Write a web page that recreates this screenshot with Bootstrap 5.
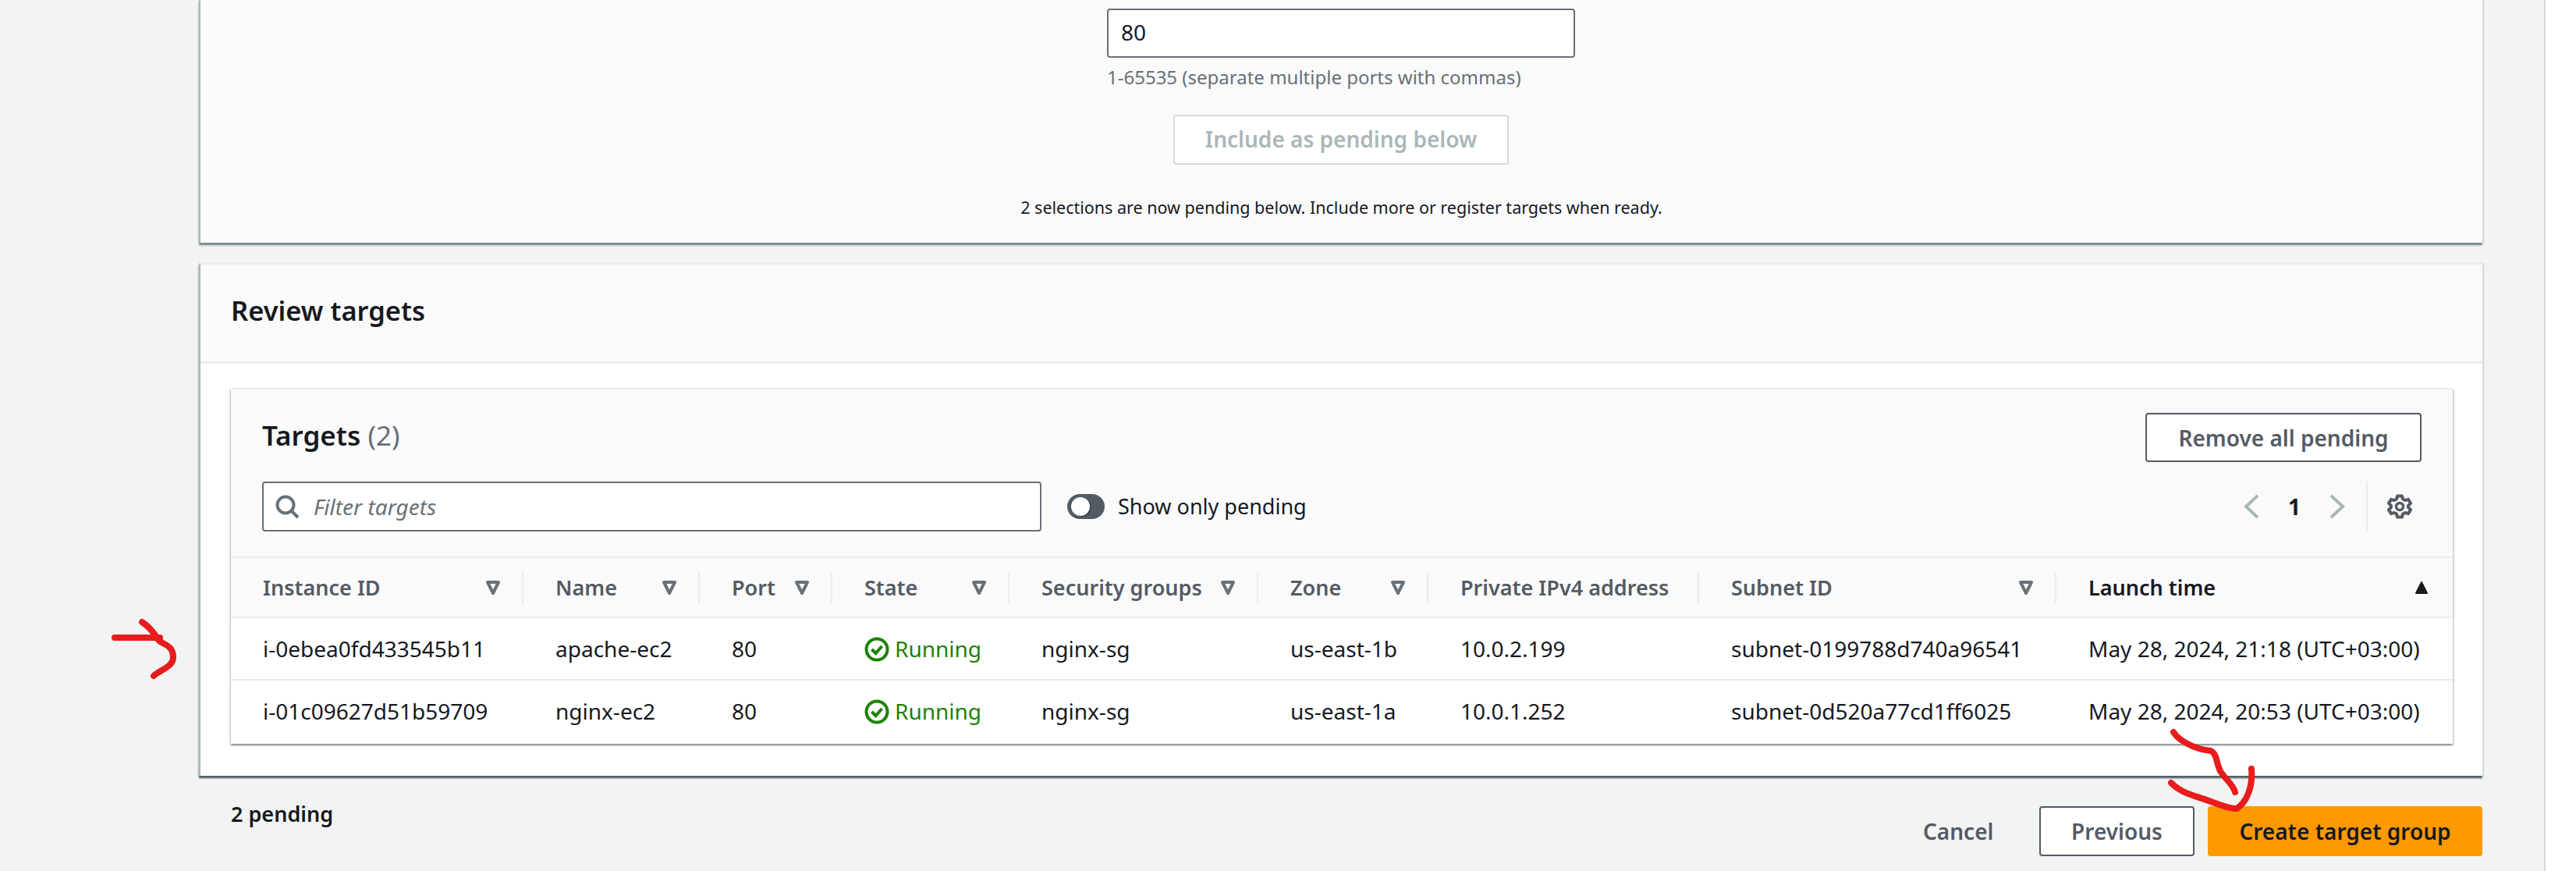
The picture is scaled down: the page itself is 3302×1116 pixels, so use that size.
<!doctype html>
<html lang="en">
<head>
<meta charset="utf-8">
<title>Review targets</title>
<link rel="stylesheet" href="https://cdn.jsdelivr.net/npm/bootstrap@5.3.0/dist/css/bootstrap.min.css">
<style>
html,body{height:1116px;overflow:hidden}
body{font-family:"Noto Sans",sans-serif;font-size:28px;line-height:40px;color:#16191f;background:#fff;position:relative}
.shell{width:3302px;height:1116px}
.mainarea{width:3263px;background:#f2f3f3;padding:0 79px 0 255px;border-right:2px solid #d5dbdb}
.panel{background:#fff;border:0;border-left:2px solid #aab7b8;box-shadow:2px 0 1px #d5dbdb;position:relative}
.panel-top{background:#fafafa;height:311px;padding-top:11px;box-shadow:2px 0 1px #d5dbdb,0 3px 2px rgba(0,28,36,.55)}
.panel-review{margin-top:26px;height:657px;border-top:2px solid #eaeded;box-shadow:2px 0 1px #d5dbdb,0 3px 2px rgba(0,28,36,.75)}
.panel-head{height:127px;background:#fafafa;border-bottom:3px solid #eaeded;padding:0 39px 7px;font-size:34.5px;font-weight:600}
.port-block{width:600px;margin-left:1162px}
.port-input{width:600px;height:63px;background:#fff;border:2px solid #687078;border-radius:4px;padding:0 16px;font-size:28px;line-height:56px;color:#16191f}
.hint{font-size:24px;line-height:34px;color:#687078;margin-top:8px}
.btn-include{display:block;width:430px;height:64px;margin:31px 0 0 1247px;padding:0 0 2px;background:#fff;border:2px solid #d5dbdb;border-radius:4px;color:#aab7b8;font-size:28px;font-weight:600}
.pending-note{text-align:center;font-size:21.5px;line-height:32px;margin-top:39px}
.inner{margin:31px 38px 0 39px;background:#fff;box-shadow:0 2px 2px rgba(0,28,36,.35),2px 2px 2px rgba(0,28,36,.12),-2px 2px 2px rgba(0,28,36,.12);border-top:2px solid #eaeded;height:456px}
.inner-head{background:#fafafa;height:214px;padding:0 40px;position:relative}
.targets-title{font-size:35px;font-weight:600;line-height:44px;padding-top:37px}
.targets-title span{font-weight:400;color:#687078}
.btn-remove{width:354px;height:63px;margin-top:30px;padding:0;background:#fff;border:2px solid #545b64;border-radius:4px;color:#545b64;font-size:28px;font-weight:600;line-height:1}
.tools{margin-top:25px;height:64px}
.filter{width:999px;height:64px;background:#fff;border:2px solid #687078;border-radius:4px;padding:0 20px 0 15px;gap:18px}
.filter-text{font-style:italic;color:#687078;font-size:28px}
.toggle-track{width:48px;height:32px;border-radius:16px;background:#545b64;padding:4px 5px;margin-right:17px}
.toggle-knob{width:24px;height:24px;border-radius:50%;background:#fff;display:block;box-shadow:1px 1px 2px rgba(0,28,36,.6)}
.toggle-wrap{margin-left:33px;font-size:27px}
.pager{margin-left:auto;height:64px;padding-right:12px}
.pager-num{font-weight:700;font-size:28px;width:88px;text-align:center}
.pager-sep{width:2px;height:64px;background:#eaeded;margin:0 25px 0 26px}
table.tgt{table-layout:fixed;width:2848px;margin:0;--bs-table-bg:transparent;border-collapse:collapse}
table.tgt th{background:#fafafa;padding:18px 0 17px;border-top:2px solid #eaeded;border-bottom:2px solid #eaeded;font-weight:600;color:#545b64;font-size:27px}
.th-in{height:40px;padding:0 27px 0 41px;border-right:2px solid #eaeded;display:flex;justify-content:space-between;align-items:center;white-space:nowrap}
table.tgt th:last-child .th-in{border-right:0;padding-right:30px;color:#16191f}
table.tgt td{padding:19px 0 19px 41px;border-bottom:2px solid #eaeded;font-size:28px;white-space:nowrap;color:#16191f;height:80px;line-height:40px}
table.tgt td.ok{color:#1d8102}
table.tgt tr:last-child td{border-bottom:0;height:81px}
.ok svg{margin-right:7px;vertical-align:-6px}
.foot{height:122px;position:relative}
.pending-count{font-size:27px;font-weight:600;line-height:40px;padding:29px 0 0 41px}
.foot-actions{gap:17px;margin-top:-30px}
.btn-cancel,.btn-prev,.btn-create{height:64px;padding:0;font-size:28px;font-weight:600;border-radius:4px;line-height:1}
.btn-cancel{background:none;border:0;color:#545b64;width:88px;margin-right:44px}
.btn-prev{width:199px;background:#fff;border:2px solid #545b64;color:#545b64}
.btn-create{width:352px;background:#ff9900;border:0;color:#16191f}
.ink{position:absolute;left:0;top:0;width:3302px;height:1116px;pointer-events:none}
.ink path{fill:none;stroke:#e81c1c;stroke-width:8;stroke-linecap:round;stroke-linejoin:round}
</style>
</head>
<body>
<div class="shell d-flex">
  <div class="mainarea">
    <section class="panel panel-top">
      <div class="port-block">
        <div class="port-input">80</div>
        <div class="hint">1-65535 (separate multiple ports with commas)</div>
      </div>
      <button type="button" class="btn-include" disabled>Include as pending below</button>
      <div class="pending-note">2 selections are now pending below. Include more or register targets when ready.</div>
    </section>
    <section class="panel panel-review">
      <div class="panel-head d-flex align-items-center"><span>Review targets</span></div>
      <div class="inner">
        <div class="inner-head">
          <div class="d-flex justify-content-between align-items-start">
            <div class="targets-title">Targets <span>(2)</span></div>
            <button type="button" class="btn-remove">Remove all pending</button>
          </div>
          <div class="tools d-flex align-items-center">
            <div class="filter d-flex align-items-center">
              <svg width="31" height="31" viewBox="0 0 31 31" fill="none" stroke="#687078" stroke-width="4"><circle cx="13" cy="13" r="10.5"/><path d="M20 20l9 9"/></svg>
              <span class="filter-text">Filter targets</span>
            </div>
            <div class="toggle-wrap d-flex align-items-center">
              <span class="toggle-track d-flex"><span class="toggle-knob"></span></span>
              <span>Show only pending</span>
            </div>
            <div class="pager d-flex align-items-center">
              <svg width="22" height="32" viewBox="0 0 22 32" fill="none" stroke="#aab7b8" stroke-width="4"><path d="M19 2L4 16l15 14"/></svg>
              <span class="pager-num">1</span>
              <svg width="22" height="32" viewBox="0 0 22 32" fill="none" stroke="#aab7b8" stroke-width="4"><path d="M3 2l15 14L3 30"/></svg>
              <span class="pager-sep"></span>
              <svg width="32" height="32" viewBox="0 0 32 32" fill="none" stroke="#545b64" stroke-width="4"><circle cx="16" cy="16" r="4.5" stroke-width="3.5"/><path d="M13 2.5h6l1 4 3 1.6 4-1.2 3 5-3 3v2.2l3 3-3 5-4-1.2-3 1.6-1 4h-6l-1-4-3-1.6-4 1.2-3-5 3-3v-2.2l-3-3 3-5 4 1.2 3-1.6z" stroke-linejoin="round"/></svg>
            </div>
          </div>
        </div>
        <table class="table tgt">
          <colgroup><col style="width:375px"><col style="width:226px"><col style="width:170px"><col style="width:227px"><col style="width:319px"><col style="width:218px"><col style="width:347px"><col style="width:458px"><col style="width:508px"></colgroup>
          <thead><tr>
            <th><div class="th-in">Instance ID<svg width="20" height="20" viewBox="0 0 20 20" fill="none" stroke="#687078" stroke-width="4" stroke-linejoin="round"><path d="M3 3h14l-7 14z"/></svg></div></th>
            <th><div class="th-in">Name<svg width="20" height="20" viewBox="0 0 20 20" fill="none" stroke="#687078" stroke-width="4" stroke-linejoin="round"><path d="M3 3h14l-7 14z"/></svg></div></th>
            <th><div class="th-in">Port<svg width="20" height="20" viewBox="0 0 20 20" fill="none" stroke="#687078" stroke-width="4" stroke-linejoin="round"><path d="M3 3h14l-7 14z"/></svg></div></th>
            <th><div class="th-in">State<svg width="20" height="20" viewBox="0 0 20 20" fill="none" stroke="#687078" stroke-width="4" stroke-linejoin="round"><path d="M3 3h14l-7 14z"/></svg></div></th>
            <th><div class="th-in">Security groups<svg width="20" height="20" viewBox="0 0 20 20" fill="none" stroke="#687078" stroke-width="4" stroke-linejoin="round"><path d="M3 3h14l-7 14z"/></svg></div></th>
            <th><div class="th-in">Zone<svg width="20" height="20" viewBox="0 0 20 20" fill="none" stroke="#687078" stroke-width="4" stroke-linejoin="round"><path d="M3 3h14l-7 14z"/></svg></div></th>
            <th><div class="th-in">Private IPv4 address</div></th>
            <th><div class="th-in">Subnet ID<svg width="20" height="20" viewBox="0 0 20 20" fill="none" stroke="#687078" stroke-width="4" stroke-linejoin="round"><path d="M3 3h14l-7 14z"/></svg></div></th>
            <th><div class="th-in">Launch time<svg width="20" height="20" viewBox="0 0 20 20" fill="#16191f" stroke="#16191f" stroke-width="2" stroke-linejoin="round"><path d="M10 3l7 14H3z"/></svg></div></th>
          </tr></thead>
          <tbody>
            <tr><td>i-0ebea0fd433545b11</td><td>apache-ec2</td><td>80</td><td class="ok"><svg width="32" height="32" viewBox="0 0 32 32" fill="none" stroke="#1d8102" stroke-width="4"><circle cx="16" cy="16" r="13.5"/><path d="M9.5 16l5 5 8-9"/></svg>Running</td><td>nginx-sg</td><td>us-east-1b</td><td>10.0.2.199</td><td>subnet-0199788d740a96541</td><td>May 28, 2024, 21:18 (UTC+03:00)</td></tr>
            <tr><td>i-01c09627d51b59709</td><td>nginx-ec2</td><td>80</td><td class="ok"><svg width="32" height="32" viewBox="0 0 32 32" fill="none" stroke="#1d8102" stroke-width="4"><circle cx="16" cy="16" r="13.5"/><path d="M9.5 16l5 5 8-9"/></svg>Running</td><td>nginx-sg</td><td>us-east-1a</td><td>10.0.1.252</td><td>subnet-0d520a77cd1ff6025</td><td>May 28, 2024, 20:53 (UTC+03:00)</td></tr>
          </tbody>
        </table>
      </div>
    </section>
    <div class="foot">
      <div class="pending-count">2 pending</div>
      <div class="foot-actions d-flex justify-content-end">
        <button type="button" class="btn-cancel">Cancel</button>
        <button type="button" class="btn-prev">Previous</button>
        <button type="button" class="btn-create">Create target group</button>
      </div>
    </div>
  </div>
</div>
<svg class="ink" viewBox="0 0 3302 1116">
  <path d="M147 817H205"/>
  <path d="M182 797C190 802 197 810 203 820C208 826 222 826 222 842C222 855 205 858 197 866"/>
  <path d="M2786 938C2792 948 2812 960 2834 962C2842 966 2840 975 2846 988C2852 998 2862 1004 2865 1015"/>
  <path d="M2783 1003C2795 1016 2815 1020 2834 1027C2845 1031 2858 1037 2867 1036C2880 1028 2888 1008 2886 985"/>
</svg>
<script src="https://cdn.jsdelivr.net/npm/bootstrap@5.3.0/dist/js/bootstrap.bundle.min.js"></script>
</body>
</html>
